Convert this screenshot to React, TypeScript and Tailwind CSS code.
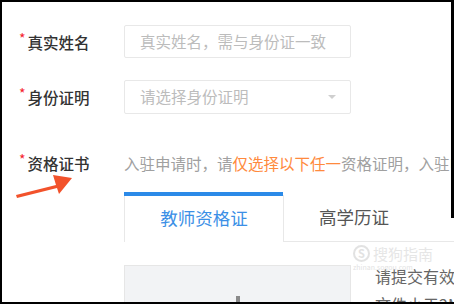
import React from "react";

const font = { fontFamily: '"Noto Sans CJK SC", "Noto Sans", sans-serif' };

function Label({ text }: { text: string }) {
  return (
    <div className="w-[105px] shrink-0 flex items-start pl-[19px]">
      <span className="text-[#f5222d] text-[13px] leading-none mt-[-2px] mr-[2px]">*</span>
      <span className="text-[15.5px] font-medium text-[#333] leading-[22px]">{text}</span>
    </div>
  );
}

export default function App() {
  return (
    <div className="relative w-[454px] h-[304px] bg-black overflow-hidden" style={font}>
      <div className="absolute left-[2px] top-[2px] w-[452px] h-[300px] bg-white overflow-hidden">
        <div className="flex flex-col">
          {/* Row 1 */}
          <div className="flex items-center mt-[23px]">
            <div className="w-[122px] shrink-0 flex items-center pl-[17px]">
              <span className="text-[#f5222d] text-[14px] leading-none self-start mt-[0px] mr-[2px]">*</span>
              <span className="text-[15.5px] font-medium text-[#333] leading-[22px]">真实姓名</span>
            </div>
            <div className="w-[227px] h-[33px] border border-[#e8e8e8] rounded-[2px] flex items-center pl-[15px]">
              <span className="text-[15.5px] text-[#bcbcbc] leading-none">真实姓名，需与身份证一致</span>
            </div>
          </div>
          {/* Row 2 */}
          <div className="flex items-center mt-[22px]">
            <div className="w-[122px] shrink-0 flex items-center pl-[17px]">
              <span className="text-[#f5222d] text-[14px] leading-none self-start mr-[2px]">*</span>
              <span className="text-[15.5px] font-medium text-[#333] leading-[22px]">身份证明</span>
            </div>
            <div className="w-[227px] h-[34px] border border-[#e8e8e8] rounded-[2px] flex items-center justify-between pl-[15px] pr-[14px]">
              <span className="text-[15.5px] text-[#bcbcbc] leading-none">请选择身份证明</span>
              <svg width="8" height="5" viewBox="0 0 8 5">
                <path d="M0 0 L8 0 L4 4 Z" fill="#cfcfcf" />
              </svg>
            </div>
          </div>
          {/* Row 3 */}
          <div className="flex items-center mt-[38px]">
            <div className="w-[122px] shrink-0 flex items-center pl-[17px]">
              <span className="text-[#f5222d] text-[14px] leading-none self-start mr-[2px]">*</span>
              <span className="text-[15.5px] font-medium text-[#333] leading-[22px]">资格证书</span>
            </div>
            <div className="whitespace-nowrap text-[15.5px] leading-[22px] text-[#a0a0a0]">
              入驻申请时，请<span className="text-[#ff8a3d]">仅选择以下任一</span>资格证明，入驻申请
            </div>
          </div>
          {/* Tabs */}
          <div className="flex ml-[122px] mt-[18px] h-[50px]">
            <div className="w-[159px] shrink-0 flex flex-col border-l border-[#e8e8e8]">
              <div className="h-[4px] bg-[#2b8ae8] -ml-px"></div>
              <div className="flex-1 flex items-center justify-center pb-[2px]">
                <span className="text-[17.5px] text-[#3b8fe6] leading-none">教师资格证</span>
              </div>
            </div>
            <div className="flex-1 border-l border-b border-[#e8e8e8] mt-[3px] flex items-center pl-[35px] pb-[2px]">
              <span className="text-[17.5px] text-[#555] leading-none">高学历证</span>
            </div>
          </div>
          {/* Upload row */}
          <div className="flex ml-[122px] mt-[23px]">
            <div className="relative w-[227px] h-[60px] shrink-0 bg-[#f2f3f5] border border-[#e6e6e6]">
              <div className="absolute left-[111px] top-[30px] w-[4px] h-[8px] bg-[#8a8a8a]"></div>
            </div>
            <div className="ml-[24px] flex flex-col whitespace-nowrap text-[16px] text-[#666] leading-[28px] -mt-[3px]">
              <span>请提交有效证件</span>
              <span>文件小于2M</span>
            </div>
          </div>
        </div>

        {/* watermark */}
        <div className="absolute left-[351px] top-[243px] flex flex-col items-start opacity-60 pointer-events-none">
          <div className="flex items-center">
            <div className="w-[17px] h-[17px] rounded-full border-[2px] border-[#d0d0d0] flex items-center justify-center text-[11px] font-bold text-[#d0d0d0] leading-none">S</div>
            <span className="ml-[3px] text-[15px] text-[#d6d6d6] leading-none">搜狗指南</span>
          </div>
          <span className="text-[7px] text-[#cfcfcf] leading-none mt-[2px]">zhinan.sogou.com</span>
        </div>

        {/* annotation arrow */}
        <svg className="absolute left-0 top-0" width="100" height="220" viewBox="0 0 100 220" style={{ pointerEvents: "none" }}>
          <path d="M14 193 L54 183 L51 173 L70 176 L57 192 L55 186 L15 196 Z" fill="#f2522b" />
        </svg>
      </div>
      <div className="absolute right-0 top-0 w-[3px] h-[218px] bg-black"></div>
    </div>
  );
}
